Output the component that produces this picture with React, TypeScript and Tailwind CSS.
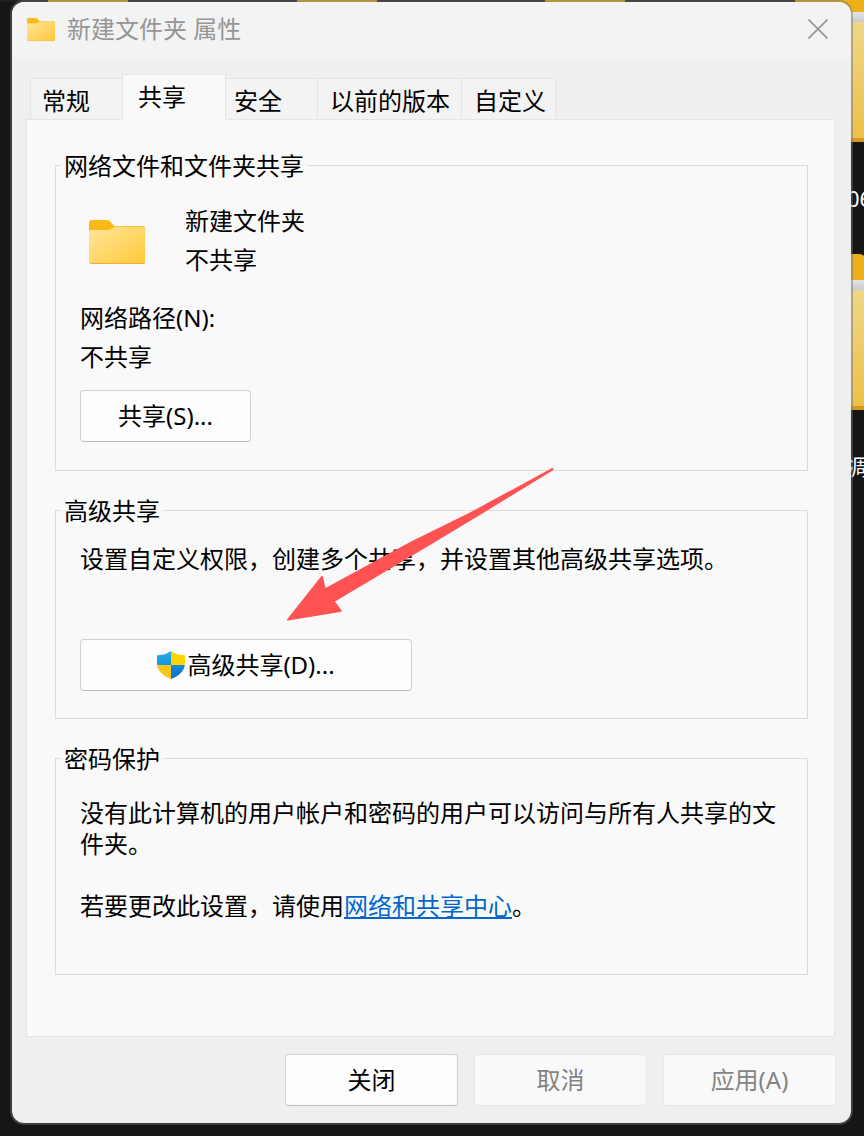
import { useId, type ReactNode } from 'react';

const tabs = [
  { label: '常规', className: 'w-[92px] pl-[11px]' },
  { label: '共享', className: 'w-[104px] pl-[15px]', active: true },
  { label: '安全', className: 'w-[92px] pl-2' },
  { label: '以前的版本', className: 'w-[144px] pl-3' },
  { label: '自定义', className: 'w-[94px] pl-3' },
];

// Folders peeking out along the right edge of the desktop.
const desktopFolders = [
  { name: '06', className: 'top-[-14px]' },
  { name: '凋', className: 'top-[254px]' },
];

function FolderIcon({ className }: { className: string }) {
  const id = useId();
  return (
    <svg viewBox="0 0 56 44" className={className} preserveAspectRatio="none" aria-hidden="true">
      <defs>
        <linearGradient id={id} x1="0" y1="0" x2="1" y2="1">
          <stop offset="0" stopColor="#ffe69c" />
          <stop offset="1" stopColor="#ffc938" />
        </linearGradient>
      </defs>
      <path d="M0 2.5A2.5 2.5 0 0 1 2.5 0H17c2 0 3.200.6 4.500 1.900L25.500 6H54a2 2 0 0 1 2 2v8H0z" fill="#fbb91a" />
      <path d="M0 12a2 2 0 0 1 2-2h16.500c2 0 3-.4 4.500-1.600L24.500 7.400C25 7 25.500 6.800 26.500 6.800H54a2 2 0 0 1 2 2V42a2 2 0 0 1-2 2H2a2 2 0 0 1-2-2z" fill={`url(#${id})`} />
      <path d="M.5 42.300c.4.800 1 1.200 1.800 1.200h51.400c.8 0 1.400-.4 1.800-1.200" fill="none" stroke="#e9b13a" />
    </svg>
  );
}

function ShieldIcon() {
  return (
    <svg viewBox="0 0 28 28" className="h-7 w-7 shrink-0" aria-hidden="true">
      <defs>
        <clipPath id="shield">
          <path d="M14 0c3.800 2.800 8.500 4.200 14 4.300V12c0 7.500-5.500 12.800-14 16C5.500 24.800 0 19.500 0 12V4.300C5.500 4.200 10.200 2.800 14 0z" />
        </clipPath>
        <linearGradient id="shield-blue" x1="0" y1="0" x2="0" y2="1">
          <stop offset="0" stopColor="#2bade8" />
          <stop offset="1" stopColor="#1794dc" />
        </linearGradient>
        <linearGradient id="shield-deep" x1="0" y1="0" x2="0" y2="1">
          <stop offset="0" stopColor="#1488dc" />
          <stop offset="1" stopColor="#0671c8" />
        </linearGradient>
      </defs>
      <g clipPath="url(#shield)">
        <path d="M0 0h14v14H0z" fill="url(#shield-blue)" />
        <path d="M14 0h14v14H14z" fill="#ffd500" />
        <path d="M0 14h14v14H0z" fill="#ffc414" />
        <path d="M14 14h14v14H14z" fill="url(#shield-deep)" />
      </g>
    </svg>
  );
}

function Group({ title, className, children }: { title: string; className: string; children: ReactNode }) {
  return (
    <fieldset className={`relative border border-[#dcdcdc] px-6 ${className}`}>
      <legend className="-ml-[19px] px-[3px] pt-0.5 leading-[30px]">{title}</legend>
      {children}
    </fieldset>
  );
}

function Button({ className = '', disabled, children }: { className?: string; disabled?: boolean; children: ReactNode }) {
  return (
    <button
      type="button"
      disabled={disabled}
      className={`flex h-[52px] items-center justify-center rounded border border-[#d0d0d0] border-b-[#bbb] bg-[#fdfdfd] disabled:border-[#e8e8e8] disabled:bg-[#f9f9f9] disabled:text-[#838383] ${className}`}
    >
      {children}
    </button>
  );
}

function Desktop() {
  return (
    <div className="absolute inset-0 overflow-hidden" aria-hidden="true">
      <div className="absolute inset-x-0 top-0 h-0.5 bg-[#242020]" />
      <div className="absolute left-12 top-0 h-0.5 w-20 bg-[#e9b11b]" />
      <div className="absolute left-[297px] top-0 h-0.5 w-20 bg-[#e9b11b]" />
      <div className="absolute left-[545px] top-0 h-0.5 w-20 bg-[#e9b11b]" />
      {desktopFolders.map((f) => (
        <div key={f.name} className={`absolute right-[-91px] w-40 ${f.className}`}>
          <div className="h-[26px] w-[72px] rounded-t-lg bg-[#edb01a]" />
          <div className="h-2.5 bg-gradient-to-b from-[#e4e4e8] to-[#c9cbd0]" />
          <div className="h-[116px] bg-gradient-to-b from-[#efd686] to-[#ecc04a]" />
          <div className="h-1 bg-[#d6991b]" />
          <p className="mt-10 pl-[52px] text-[22px] leading-8 text-white">{f.name}</p>
        </div>
      ))}
    </div>
  );
}

export default function App() {
  return (
    <div className="relative flex min-h-screen flex-col overflow-hidden bg-[#161616] pr-[11px] pb-[11px] pl-2.5 font-['Noto_Sans','Noto_Sans_CJK_SC',sans-serif] text-2xl text-black">
      <Desktop />
      <main className="relative flex grow flex-col rounded-[14px] border-2 border-[#6e6e6e]/45 bg-[#efefef] bg-clip-padding">
        <header className="flex h-14 items-center rounded-t-xl bg-[#f3f3f3] pr-[23px] pb-0.5 pl-[15px]">
          <FolderIcon className="h-[23px] w-7" />
          <h1 className="ml-3 leading-8 text-[#959595]">新建文件夹 属性</h1>
          <button type="button" aria-label="关闭窗口" className="ml-auto">
            <svg viewBox="0 0 20 20" className="h-5 w-5" stroke="#959595" strokeWidth="1.600" aria-hidden="true">
              <path d="M.5.5l19 19M19.500.5l-19 19" />
            </svg>
          </button>
        </header>

        <div className="flex grow flex-col pt-4 pr-4 pl-3.5">
          <div role="tablist" className="relative -mb-px flex items-end pl-1">
            {tabs.map((t) => (
              <button
                key={t.label}
                type="button"
                role="tab"
                aria-selected={!!t.active}
                className={`border border-[#e5e5e5] text-left ${
                  t.active
                    ? 'h-[46px] border-b-[#f9f9f9] bg-[#f9f9f9]'
                    : 'h-[42px] border-l-0 bg-[#f3f3f3] pt-[3px] first:border-r-0 first:border-l'
                } ${t.className}`}
              >
                {t.label}
              </button>
            ))}
          </div>

          <div role="tabpanel" className="grow border border-[#e5e5e5] bg-[#f9f9f9] pt-[29px] pr-[26px] pb-[61px] pl-7">
            <Group title="网络文件和文件夹共享" className="h-[322px]">
              <div className="mt-5 flex items-start pl-[9px] leading-[39px]">
                <FolderIcon className="mt-[19px] h-11 w-14" />
                <div className="ml-10">
                  <p>新建文件夹</p>
                  <p>不共享</p>
                </div>
              </div>
              <div className="mt-[19px] leading-[39px]">
                <p>网络路径(N):</p>
                <p>不共享</p>
              </div>
              <Button className="mt-3.5 w-[171px]">共享(S)...</Button>
            </Group>

            <Group title="高级共享" className="mt-[23px] h-[225px]">
              <p className="mt-[17px] leading-[31px]">设置自定义权限，创建多个共享，并设置其他高级共享选项。</p>
              <Button className="mt-[65px] w-[332px] gap-0.5">
                <ShieldIcon />
                高级共享(D)...
              </Button>
              <svg
                viewBox="0 0 268 154"
                className="pointer-events-none absolute -top-[59px] left-[230px] h-[154px] w-[268px]"
                aria-hidden="true"
              >
                <path
                  d="M1 152.500L35 109.500Q36.500 108.500 37 110L39.500 121L126 74L184 45.500L266 1Q268 1 267.500 3L198 45.500L144 78L49 134.500L55.500 143.500Q56 145 54 145L2 153.500Q0 153.500 1 152.500z"
                  fill="#ff5252"
                />
              </svg>
            </Group>

            <Group title="密码保护" className="mt-[23px] h-[233px]">
              <div className="mt-[23px] leading-[31px]">
                <p>没有此计算机的用户帐户和密码的用户可以访问与所有人共享的文件夹。</p>
                <p className="mt-[31px]">
                  若要更改此设置，请使用
                  <a href="#network-center" className="text-[#0066cc] underline">网络和共享中心</a>。
                </p>
              </div>
            </Group>
          </div>

          <footer className="-mr-px flex justify-end gap-4 pt-[17px] pb-[17px]">
            <Button className="w-[173px]">关闭</Button>
            <Button disabled className="w-[173px]">取消</Button>
            <Button disabled className="w-[173px]">应用(A)</Button>
          </footer>
        </div>
      </main>
    </div>
  );
}
